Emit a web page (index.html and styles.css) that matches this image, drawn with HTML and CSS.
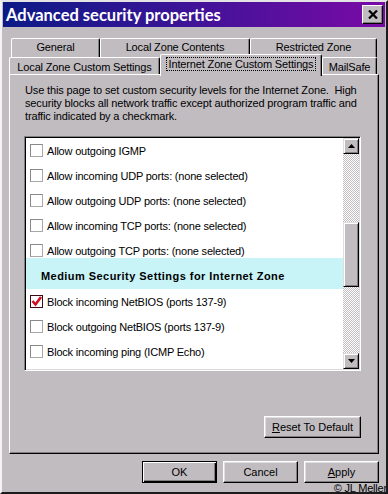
FILE: index.html
```html
<!DOCTYPE html>
<html lang="en">
<head>
    <meta charset="UTF-8">
    <title>Advanced security properties</title>
    <link rel="stylesheet" href="styles.css">
</head>
<body>
    <div class="window">
        <!-- Title bar -->
        <div class="titlebar">
            <span class="title">Advanced security properties</span>
            <button class="close-btn" aria-label="Close">
                <svg width="10" height="9" viewBox="0 0 10 9"><path d="M1 0.5 L9 8.5 M9 0.5 L1 8.5" stroke="#000" stroke-width="2.2"/></svg>
            </button>
        </div>

        <div class="dialog">
            <!-- Tabs, two rows -->
            <div class="tab-row back">
                <div class="tab w-general">General</div>
                <div class="tab w-contents">Local Zone Contents</div>
                <div class="tab w-restricted">Restricted Zone</div>
            </div>
            <div class="tab-row front">
                <div class="tab w-local">Local Zone Custom Settings</div>
                <div class="tab w-internet active"><span class="focus">Internet Zone Custom Settings</span></div>
                <div class="tab w-mail">MailSafe</div>
            </div>

            <div class="panel">
                <p class="intro">Use this page to set custom security levels for the Internet Zone.&nbsp; High<br>security blocks all network traffic except authorized program traffic and<br>traffic indicated by a checkmark.</p>

                <div class="listbox">
                    <div class="items">
                        <div class="item"><span class="check"></span>Allow outgoing IGMP</div>
                        <div class="item"><span class="check"></span>Allow incoming UDP ports: (none selected)</div>
                        <div class="item"><span class="check"></span>Allow outgoing UDP ports: (none selected)</div>
                        <div class="item"><span class="check"></span>Allow incoming TCP ports: (none selected)</div>
                        <div class="item"><span class="check"></span>Allow outgoing TCP ports: (none selected)</div>
                        <div class="group">Medium Security Settings for Internet Zone</div>
                        <div class="item"><span class="check checked"><svg width="13" height="13" viewBox="0 0 13 13"><path d="M2.5 6 L5.5 9.5 L11 2" fill="none" stroke="#cc1020" stroke-width="2.6"/></svg></span>Block incoming NetBIOS (ports 137-9)</div>
                        <div class="item"><span class="check"></span>Block outgoing NetBIOS (ports 137-9)</div>
                        <div class="item"><span class="check"></span>Block incoming ping (ICMP Echo)</div>
                        <div class="item"><span class="check"></span></div>
                    </div>
                    <div class="scrollbar">
                        <div class="sb-btn"><svg width="7" height="4" viewBox="0 0 7 4"><path d="M3.5 0 L7 4 L0 4 Z" fill="#000"/></svg></div>
                        <div class="sb-track top"></div>
                        <div class="sb-thumb"></div>
                        <div class="sb-track"></div>
                        <div class="sb-btn"><svg width="7" height="4" viewBox="0 0 7 4"><path d="M0 0 L7 0 L3.5 4 Z" fill="#000"/></svg></div>
                    </div>
                </div>

                <div class="panel-actions">
                    <button class="btn reset"><u>R</u>eset To Default</button>
                </div>
            </div>

            <div class="actions">
                <button class="btn default">OK</button>
                <button class="btn">Cancel</button>
                <button class="btn"><u>A</u>pply</button>
            </div>
        </div>

        <span class="credit">&copy; JL Meller</span>
    </div>
</body>
</html>
```

FILE: styles.css
```css
body {
    margin: 0;
    padding: 0;
    background: #c0bcc0;
    font-family: "Liberation Sans", Arial, sans-serif;
    font-size: 11px;
    color: #000;
}

.window {
    position: relative;
    width: 388px;
    height: 494px;
    box-sizing: border-box;
    background: #c0bcc0;
    border: 2px solid;
    border-color: #e4e4e4 #1c1c1c #1c1c1c #f4f4f4;
    padding: 0 1px;
    overflow: hidden;
}

/* title bar */
.titlebar {
    height: 25px;
    display: flex;
    align-items: center;
    justify-content: space-between;
    padding: 0 2px 0 3px;
    background: linear-gradient(to right, #0c1a86, #3a1496 45%, #7a0aa6);
}

.title {
    font-family: Lato, "DejaVu Sans", sans-serif;
    font-weight: 700;
    font-size: 16.5px;
    color: #fff;
}

.close-btn {
    width: 21px;
    height: 19px;
    padding: 0;
    margin: 0;
    display: flex;
    align-items: center;
    justify-content: center;
    background: #c0bcc0;
    border: 1px solid;
    border-color: #fff #000 #000 #fff;
    box-shadow: inset -1px -1px #808080;
}

.dialog {
    padding: 0 6px;
}

/* tabs */
.tab-row {
    display: flex;
    align-items: flex-end;
}

.tab-row.back {
    margin-top: 11px;
    padding-left: 2px;
    height: 19px;
}

.tab-row.front {
    height: 17px;
}

.tab {
    box-sizing: border-box;
    display: flex;
    align-items: center;
    justify-content: center;
    background: #c0bcc0;
    border-top: 1px solid #fff;
    border-left: 1px solid #fff;
    border-right: 1px solid #000;
    border-radius: 2px 2px 0 0;
    box-shadow: inset -1px 0 #808080;
    white-space: nowrap;
    letter-spacing: -0.15px;
}

.back .tab {
    height: 19px;
    padding-bottom: 2px;
}

.front .tab {
    height: 17px;
    padding-top: 1px;
}

.front .tab.active {
    position: relative;
    z-index: 2;
    height: 22px;
    margin-bottom: -2px;
    padding-top: 0;
    padding-bottom: 4px;
}

.focus {
    outline: 1px dotted #000;
    padding: 0 2px;
}

.w-general { width: 89px; }
.w-contents { width: 150px; }
.w-restricted { width: 127px; }
.w-local { width: 151px; }
.w-internet { width: 162px; }
.w-mail { width: 55px; }

/* panel */
.panel {
    box-sizing: border-box;
    height: 380px;
    border: 1px solid;
    border-color: #fff #000 #000 #fff;
    box-shadow: inset -1px -1px #808080;
    padding: 9px 17px 0 14px;
    display: flex;
    flex-direction: column;
}

.intro {
    margin: 0 0 13px 1px;
    line-height: 13px;
    white-space: nowrap;
    letter-spacing: -0.15px;
}

.listbox {
    box-sizing: border-box;
    width: 337px;
    height: 235px;
    display: flex;
    background: #fff;
    border: 1px solid;
    border-color: #808080 #fff #fff #808080;
    box-shadow: inset 1px 1px #000, inset -1px -1px #dcdcdc;
    padding: 1px;
}

.items {
    flex: 1;
    overflow: hidden;
}

.item {
    height: 25px;
    display: flex;
    align-items: center;
    padding-left: 4px;
    white-space: nowrap;
    font-size: 11px;
    letter-spacing: -0.2px;
}

.check {
    box-sizing: border-box;
    width: 13px;
    height: 13px;
    margin-right: 4px;
    background: #fff;
    border: 1px solid;
    border-color: #8a8a8a #a8a8a8 #a8a8a8 #8a8a8a;
    flex: none;
}

.check.checked {
    border-color: #3a0a10;
}

.check.checked svg {
    display: block;
    margin: -1px 0 0 -1px;
}

.group {
    position: relative;
    margin-top: -5px;
    height: 31px;
    box-sizing: border-box;
    padding: 5px 0 0 15px;
    display: flex;
    align-items: center;
    background: #c8f4f8;
    font-weight: 700;
    font-size: 11px;
    letter-spacing: 0.45px;
}

/* scrollbar */
.scrollbar {
    width: 16px;
    display: flex;
    flex-direction: column;
}

.sb-btn,
.sb-thumb {
    box-sizing: border-box;
    background: #c0bcc0;
    border: 1px solid;
    border-color: #dfdfdf #000 #000 #dfdfdf;
    box-shadow: inset 1px 1px #fff, inset -1px -1px #808080;
}

.sb-btn {
    height: 16px;
    display: flex;
    align-items: center;
    justify-content: center;
}

.sb-thumb {
    height: 65px;
}

.sb-track {
    flex: 1;
    background: repeating-conic-gradient(#c0bcc0 0 25%, #fff 0 50%) 0 0 / 2px 2px;
}

.sb-track.top {
    flex: none;
    height: 68px;
}

/* buttons */
.btn {
    box-sizing: border-box;
    width: 75px;
    height: 22px;
    padding: 0;
    font-family: "Liberation Sans", Arial, sans-serif;
    font-size: 11px;
    color: #000;
    background: #c0bcc0;
    border: 1px solid;
    border-color: #fff #000 #000 #fff;
    box-shadow: inset -1px -1px #808080, inset 1px 1px #dfdfdf;
}

.btn.default {
    border: 1px solid #000;
    box-shadow: inset 1px 1px #fff, inset -1px -1px #000, inset -2px -2px #808080;
}

.panel-actions {
    display: flex;
    justify-content: flex-end;
    margin-top: 45px;
    width: 337px;
}

.btn.reset {
    width: 97px;
}

.actions {
    display: flex;
    justify-content: flex-end;
    gap: 6px;
    margin-top: 7px;
}

.credit {
    position: absolute;
    right: -2px;
    bottom: -2px;
    padding: 0 1px;
    line-height: 11px;
    background: #c0bcc0;
    font-size: 11px;
    letter-spacing: -0.2px;
}
```
